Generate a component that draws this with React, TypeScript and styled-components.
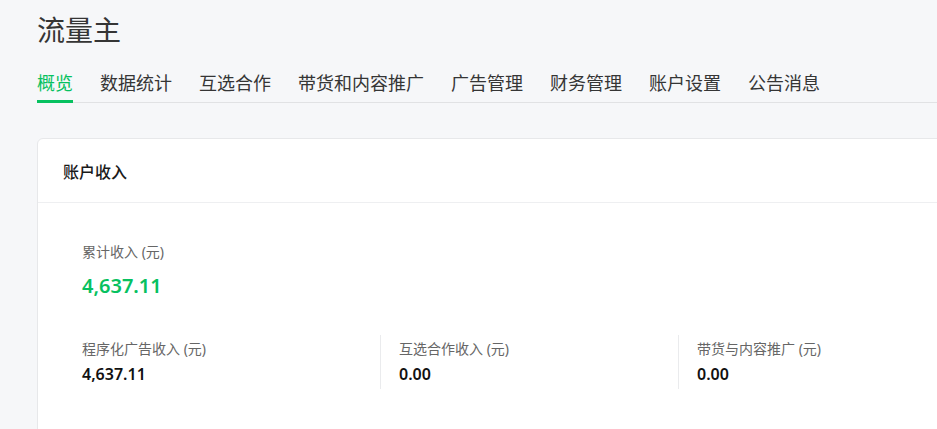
import styled, { createGlobalStyle } from "styled-components";

const GlobalStyle = createGlobalStyle`
  html, body {
    margin: 0;
    padding: 0;
    background: #f6f7f9;
    overflow: hidden;
  }
  body {
    font-family: "Noto Sans", "Noto Sans CJK SC", sans-serif;
    color: #353535;
  }
`;

const Page = styled.div`
  width: 1100px;
  padding: 0 0 0 37px;
`;

const Title = styled.h1`
  margin: 0;
  padding-top: 11px;
  font-size: 28px;
  line-height: 38px;
  font-weight: 400;
  color: #353535;
`;

const Tabs = styled.nav`
  display: flex;
  gap: 27px;
  margin-top: 21px;
  border-bottom: 1px solid #e1e2e4;
`;

const Tab = styled.div<{ $active?: boolean }>`
  font-size: 18px;
  line-height: 26px;
  padding-bottom: 4px;
  color: ${(p) => (p.$active ? "#07c160" : "#353535")};
  border-bottom: 3px solid ${(p) => (p.$active ? "#07c160" : "transparent")};
  margin-bottom: -1px;
  cursor: pointer;
`;

const Card = styled.section`
  margin-top: 35px;
  background: #fff;
  border: 1px solid #e7e8ea;
  border-radius: 6px;
  height: 400px;
`;

const CardHeader = styled.div`
  height: 63px;
  display: flex;
  align-items: center;
  padding-left: 25px;
  border-bottom: 1px solid #eeeff1;
  font-size: 16px;
  font-weight: 500;
  color: #1a1a1a;
`;

const CardBody = styled.div`
  padding: 38px 0 0 44px;
`;

const Label = styled.div`
  font-size: 14px;
  line-height: 22px;
  color: #666;
`;

const Total = styled.div`
  margin-top: 9px;
  font-size: 20px;
  line-height: 28px;
  font-weight: 600;
  color: #07c160;
`;

const Row = styled.div`
  display: flex;
  margin-top: 35px;
`;

const Col = styled.div<{ $first?: boolean }>`
  width: ${(p) => (p.$first ? "298px" : "279px")};
  padding-left: ${(p) => (p.$first ? "0" : "18px")};
  border-left: ${(p) => (p.$first ? "none" : "1px solid #eaebed")};
  padding-top: 3px;
  height: 51px;
`;

const Value = styled.div`
  margin-top: 3px;
  font-size: 16px;
  line-height: 22px;
  font-weight: 600;
  color: #111;
`;

const tabs = ["概览", "数据统计", "互选合作", "带货和内容推广", "广告管理", "财务管理", "账户设置", "公告消息"];

const items = [
  { label: "程序化广告收入 (元)", value: "4,637.11" },
  { label: "互选合作收入 (元)", value: "0.00" },
  { label: "带货与内容推广 (元)", value: "0.00" },
];

export default function App() {
  return (
    <>
      <GlobalStyle />
      <Page>
        <Title>流量主</Title>
        <Tabs>
          {tabs.map((t, i) => (
            <Tab key={t} $active={i === 0}>
              {t}
            </Tab>
          ))}
        </Tabs>
        <Card>
          <CardHeader>账户收入</CardHeader>
          <CardBody>
            <Label>累计收入 (元)</Label>
            <Total>4,637.11</Total>
            <Row>
              {items.map((it, i) => (
                <Col key={it.label} $first={i === 0}>
                  <Label>{it.label}</Label>
                  <Value>{it.value}</Value>
                </Col>
              ))}
            </Row>
          </CardBody>
        </Card>
      </Page>
    </>
  );
}
